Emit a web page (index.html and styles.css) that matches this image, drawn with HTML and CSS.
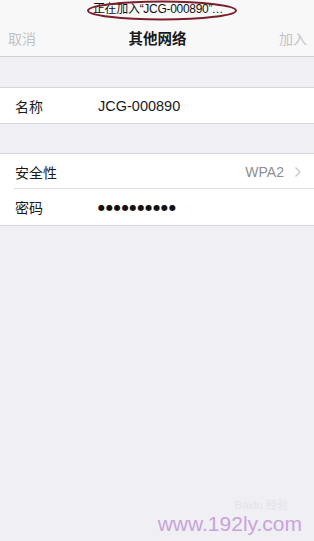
FILE: index.html
```html
<!DOCTYPE html>
<html>
<head>
<meta charset="utf-8">
<link rel="stylesheet" href="styles.css">
</head>
<body>
<div class="screen">
  <header class="nav">
    <div class="status">
      <span class="status-text">正在加入“JCG-000890”<span class="ell">…</span></span>
      <svg class="ellipse" width="152" height="21" viewBox="0 0 152 21"><ellipse cx="76" cy="10.5" rx="74" ry="9" fill="none" stroke="#7b1f2c" stroke-width="2"/></svg>
    </div>
    <div class="bar">
      <span class="btn">取消</span>
      <span class="title">其他网络</span>
      <span class="btn">加入</span>
    </div>
  </header>
  <div class="gap"></div>
  <section class="group">
    <div class="row"><span class="label">名称</span><span class="value">JCG-000890</span></div>
  </section>
  <div class="gap gap2"></div>
  <section class="group">
    <div class="row sep"><span class="label">安全性</span><span class="detail">WPA2</span><svg class="chev" width="8" height="12" viewBox="0 0 8 12"><path d="M1.5 1.5 L6 6 L1.5 10.5" fill="none" stroke="#c7c7cc" stroke-width="1.3"/></svg></div>
    <div class="row"><span class="label">密码</span><span class="dots">●●●●●●●●●●</span></div>
  </section>
  <div class="fill">
    <div class="wm">
      <span class="baidu">Baidu 经验</span>
      <span class="site">www.192ly.com</span>
    </div>
  </div>
</div>
</body>
</html>
```
FILE: styles.css
```css
* { box-sizing: border-box; margin: 0; padding: 0; }
html, body { width: 314px; height: 541px; overflow: hidden; }
body { background: #efeff4; font-family: "Liberation Sans", "Noto Sans CJK SC", sans-serif; color: #1a1a1a; }
.screen { display: flex; flex-direction: column; height: 541px; }
.nav { background: #f8f8f8; border-bottom: 1px solid #cfcfd3; height: 57px; display: flex; flex-direction: column; }
.status { position: relative; height: 21px; display: flex; justify-content: center; align-items: center; }
.status-text { font-size: 12px; line-height: 14px; color: #111; letter-spacing: -0.3px; padding-left: 2px; padding-bottom: 2px; white-space: nowrap; }
.ell { font-family: "DejaVu Sans", sans-serif; font-size: 11px; letter-spacing: 0; }
.ellipse { position: absolute; left: 86px; top: 0px; }
.bar { flex: 1; display: flex; justify-content: space-between; align-items: center; padding: 0 7px 0 8px; margin-top: -2px; }
.btn { font-size: 14px; color: #c2c2c6; }
.title { font-size: 14.5px; font-weight: bold; color: #1a1a1a; }
.gap { height: 30px; }
.gap2 { height: 29px; }
.group { background: #fff; border-top: 1px solid #d8d8dc; border-bottom: 1px solid #d8d8dc; }
.row { height: 36px; display: flex; align-items: center; padding-left: 15px; padding-right: 12px; position: relative; }
.group .row:first-child { height: 35px; }
.row.sep { height: 37px; }
.row.sep::after { content: ""; position: absolute; left: 14px; right: 0; bottom: 0; border-bottom: 1px solid #dedee2; }
.label { width: 83px; font-size: 14px; }
.value { font-size: 14.5px; }
.detail { margin-left: auto; font-size: 14px; color: #8e8e93; margin-right: 10px; }
.dots { font-family: "DejaVu Sans", sans-serif; font-size: 8px; letter-spacing: 0.9px; color: #111; }
.fill { flex: 1; display: flex; flex-direction: column; justify-content: flex-end; align-items: flex-end; padding: 0 12px 5px 0; }
.wm { display: flex; flex-direction: column; align-items: flex-end; gap: 0; }
.baidu { font-size: 11px; line-height: 13px; color: #e6e2ec; margin-right: 14px; }
.site { font-size: 21px; line-height: 24px; color: #c9a3d9; }
```
